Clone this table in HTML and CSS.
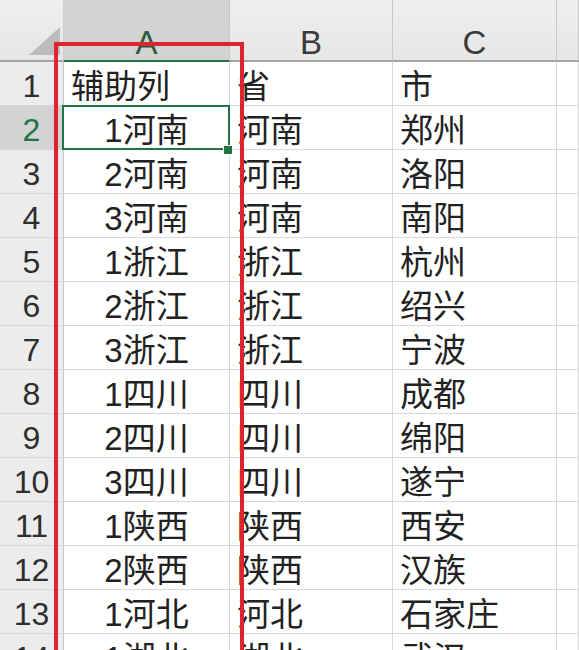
FILE: index.html
```html
<!DOCTYPE html>
<html lang="zh-CN">
<head>
<meta charset="utf-8">
<title>Sheet</title>
<link rel="stylesheet" href="styles.css">
</head>
<body>
<div class="sheet">
  <div class="corner"><svg width="31" height="28" viewBox="0 0 31 28"><polygon points="0,28 31,28 31,0" fill="#bcbcbc"/></svg></div>
  <div class="colhead sel">A</div>
  <div class="colhead">B</div>
  <div class="colhead">C</div>
  <div class="colhead"></div>

  <div class="rowhead">1</div><div class="cell">辅助列</div><div class="cell">省</div><div class="cell">市</div><div class="cell"></div>
  <div class="rowhead sel">2</div><div class="cell center active">1河南</div><div class="cell">河南</div><div class="cell">郑州</div><div class="cell"></div>
  <div class="rowhead">3</div><div class="cell center">2河南</div><div class="cell">河南</div><div class="cell">洛阳</div><div class="cell"></div>
  <div class="rowhead">4</div><div class="cell center">3河南</div><div class="cell">河南</div><div class="cell">南阳</div><div class="cell"></div>
  <div class="rowhead">5</div><div class="cell center">1浙江</div><div class="cell">浙江</div><div class="cell">杭州</div><div class="cell"></div>
  <div class="rowhead">6</div><div class="cell center">2浙江</div><div class="cell">浙江</div><div class="cell">绍兴</div><div class="cell"></div>
  <div class="rowhead">7</div><div class="cell center">3浙江</div><div class="cell">浙江</div><div class="cell">宁波</div><div class="cell"></div>
  <div class="rowhead">8</div><div class="cell center">1四川</div><div class="cell">四川</div><div class="cell">成都</div><div class="cell"></div>
  <div class="rowhead">9</div><div class="cell center">2四川</div><div class="cell">四川</div><div class="cell">绵阳</div><div class="cell"></div>
  <div class="rowhead">10</div><div class="cell center">3四川</div><div class="cell">四川</div><div class="cell">遂宁</div><div class="cell"></div>
  <div class="rowhead">11</div><div class="cell center">1陕西</div><div class="cell">陕西</div><div class="cell">西安</div><div class="cell"></div>
  <div class="rowhead">12</div><div class="cell center">2陕西</div><div class="cell">陕西</div><div class="cell">汉族</div><div class="cell"></div>
  <div class="rowhead">13</div><div class="cell center">1河北</div><div class="cell">河北</div><div class="cell">石家庄</div><div class="cell"></div>
  <div class="rowhead">14</div><div class="cell center">1湖北</div><div class="cell">湖北</div><div class="cell">武汉</div><div class="cell"></div>

  <div class="highlight"></div>
</div>
</body>
</html>
```

FILE: styles.css
```css
html, body {
  margin: 0;
  padding: 0;
  background: #ffffff;
  overflow: hidden;
}

.sheet {
  position: relative;
  display: grid;
  grid-template-columns: 64px 166px 163px 164px 1fr;
  grid-template-rows: 62px repeat(14, 44px);
  width: 579px;
  height: 650px;
  overflow: hidden;
  font-family: "Liberation Sans", "Noto Sans CJK SC", sans-serif;
  color: #222222;
}

.corner {
  box-sizing: border-box;
  display: flex;
  justify-content: flex-end;
  align-items: flex-end;
  padding: 0 3px 5px 0;
  background: linear-gradient(#efefef, #e6e6e6);
  border-right: 1px solid #cfcfcf;
  border-bottom: 2px solid #a3a3a3;
}

.colhead {
  box-sizing: border-box;
  display: flex;
  justify-content: center;
  align-items: flex-end;
  padding-bottom: 1px;
  font-size: 33px;
  line-height: 1;
  color: #3a3a3a;
  background: linear-gradient(#efefef, #e6e6e6);
  border-right: 1px solid #c9c9c9;
  border-bottom: 2px solid #a3a3a3;
}

.colhead.sel {
  background: #d3d3d3;
  color: #2f5b42;
  border-bottom-color: #217346;
}

.rowhead {
  box-sizing: border-box;
  display: flex;
  justify-content: center;
  align-items: center;
  padding-top: 5px;
  font-size: 32px;
  line-height: 1;
  color: #2e2e2e;
  background: #ececec;
  border-right: 1px solid #c9c9c9;
  border-bottom: 1px solid #d6d6d6;
}

.rowhead.sel {
  background: #d3d3d3;
  color: #217346;
}

.cell {
  box-sizing: border-box;
  display: flex;
  align-items: center;
  padding: 6px 6px 0 7px;
  font-size: 33px;
  line-height: 1;
  white-space: nowrap;
  border-right: 1px solid #d8d8d8;
  border-bottom: 1px solid #d8d8d8;
}

.cell.center {
  justify-content: center;
  padding-left: 0;
  padding-right: 0;
}

.cell.active {
  position: relative;
}

.cell.active::after {
  content: "";
  position: absolute;
  top: -1px;
  left: -2px;
  right: -1px;
  bottom: -1px;
  border: 2px solid #217346;
}

.cell.active::before {
  content: "";
  position: absolute;
  right: -4px;
  bottom: -6px;
  width: 8px;
  height: 8px;
  background: #217346;
  border: 1px solid #ffffff;
  z-index: 2;
}

.highlight {
  position: absolute;
  left: 54px;
  top: 42px;
  width: 190px;
  height: 660px;
  box-sizing: border-box;
  border: 4px solid #dd2530;
  z-index: 3;
}
```
